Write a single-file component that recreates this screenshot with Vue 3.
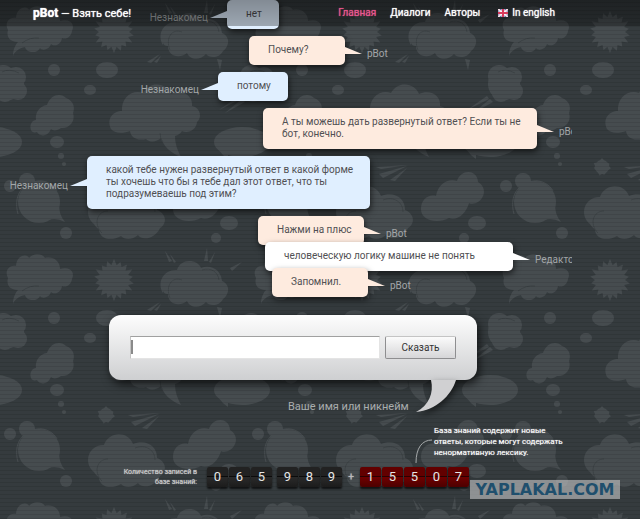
<template>
	<div class="page">
		<svg class="backdrop" aria-hidden="true">
			<defs>
				<pattern id="lines" width="4" height="4" patternUnits="userSpaceOnUse">
					<rect width="4" height="1" y="2" fill="#000" opacity="0.09" />
				</pattern>
				<pattern id="clouds" width="248" height="248" patternUnits="userSpaceOnUse">
					<g fill="#464c4f">
						<path d="M8 30c-4-8 2-13 8-12 1-12 12-12 13-8 5-6 14-4 16 0 8-2 15 3 15 11 11-3 15 4 12 10-1 6-6 9-10 7-1 7-8 9-11 6-2 6-9 7-11 4-4 7-14 4-15-1-6 1-11 5-12 9 0-7 3-12 5-14-8 0-12-5-10-12z" />
						<polygon :points="burst(114, 32, 21, 15, 18)" />
						<path d="M163 45c-7-12 2-24 14-23 4-12 20-11 24-2 10-4 20 2 21 13 9 4 7 14 1 18-4 8-14 7-17 3-6 7-16 6-19-1-9 7-19 2-19-7-3 0-4-1-5-3z" />
						<path d="M169 14l-4-11 7 10M174 15l-4-9 6 8M204 13l3-13 1 13M209 14l6-10-4 11M230 20l12-6-10 9M147 62l13-8-9 9M154 62l7-6-4 7M217 59l3 11 2-10z" />
						<g v-for="x in [8, 256]" :key="x">
							<circle :cx="x" cy="84" r="16" />
							<circle :cx="x - 5" cy="76" r="11" />
							<circle :cx="x + 8" cy="77" r="10" />
							<circle :cx="x + 10" cy="91" r="9" />
							<circle :cx="x - 3" cy="93" r="9" />
							<path :d="`M${x - 17} 96l-20 14 22-11M${x - 14} 99l-17 14 20-11`" />
						</g>
						<circle cx="54" cy="70" r="6" />
						<ellipse cx="107" cy="70" rx="11" ry="8" />
						<ellipse cx="90" cy="90" rx="6" ry="5" />
						<path d="M31 130c-2-6 2-10 5-10-1-8 4-14 11-15 4-11 14-12 19-7 8 3 9 10 7 15 3 9-5 16-12 15-4 3-8 3-10 1-4 9-12 7-14 3-3 1-5 0-6-2z" />
						<ellipse cx="57" cy="142" rx="7" ry="6" />
						<circle cx="61" cy="156" r="3" />
						<circle cx="64" cy="164" r="2" />
						<path d="M111 129c-5-11 3-18 11-18-1-15 12-22 21-18 7-13 24-10 28 1 12-5 22 2 21 12 9 2 10 12 5 16-1 8-9 12-15 9-2 3-4 4-7 5 0 9 3 15 6 21-11-4-18-12-20-19-5 4-10 5-15 1-8 2-15-1-16-8-8 3-16 2-19-2z" />
						<g v-for="x in [-6, 242]" :key="x">
							<ellipse :cx="x" cy="142" rx="28" ry="15" />
							<path :d="`M${x - 23} 150q3 5 9 9v-6z`" />
						</g>
						<polygon :points="burst(106, 167, 9, 7, 11)" />
						<path d="M128 167l32-2-27 4M131 174l28-8-24 12M142 180l17-12-12 13z" />
						<circle cx="39" cy="202" r="21" />
						<path d="M59 201q-1 13 6 21-9-5-17-2z" />
						<circle cx="27" cy="181" r="8" />
						<circle cx="10" cy="186" r="6" />
						<circle cx="66" cy="233" r="6" />
						<path d="M94 224c-11-9-6-27 10-27 5-14 24-14 29-1 13-5 24 2 24 14 10 4 10 14 3 18-5 11-18 13-22 7-6 5-13 5-17 1-10 6-22 3-22-7-2-1-3-2-5-5z" />
						<path d="M173 209c0-10 8-15 15-13 2-13 13-18 21-15 4-12 20-12 21 1 10 6 6 18-2 21-3 1-6 1-7 0-3 11-12 18-20 15-11 6-28 3-28-9z" />
						<ellipse cx="229" cy="223" rx="9" ry="7" />
						<circle cx="216" cy="238" r="5" />
					</g>
					<g fill="none" stroke="#3b4144">
						<path d="M170 50c-5-12 2-22 12-18M202 22c9-3 16 2 17 10M102 233c-9-9-5-22 6-22M135 200c11-4 20 2 20 12M22 43q8-6 17-5M2 72q7-4 17 1M160 133q0 6 3 9" />
					</g>
					<path d="M18 214c-5-18 4-31 20-33 8-1 16 4 19 10" fill="none" stroke="#464c4f" />
				</pattern>
			</defs>
			<rect width="100%" height="100%" fill="url(#clouds)" />
			<rect width="100%" height="100%" fill="url(#lines)" />
		</svg>

		<header class="header">
			<a class="logo" href="#"><b>pBot</b> — Взять себе!</a>
			<nav class="nav">
				<a v-for="item in menu" :key="item" href="#" :class="{ active: item === current }">{{ item }}</a>
				<a class="lang" href="#">
					<svg width="10" height="8" viewBox="0 0 10 8" aria-hidden="true">
						<rect width="10" height="8" fill="#4a4f95" />
						<path d="M0 0l10 8M10 0L0 8" stroke="#f3dfe6" stroke-width="2" />
						<path d="M5 0v8M0 4h10" stroke="#fff" stroke-width="3" />
						<path d="M5 0v8M0 4h10" stroke="#d93a5c" stroke-width="2" />
					</svg>
					In english
				</a>
			</nav>
		</header>

		<main>
			<div class="chat">
				<div v-for="(msg, index) in messages" :key="index" class="message" :class="[msg.type, { fresh: msg.fresh }]"
					:style="{ marginLeft: msg.offset + 'px' }">
					<div class="bubble" :style="{ width: msg.width + 'px' }">
						<div v-for="line in msg.lines" :key="line">{{ line }}</div>
					</div>
					<svg class="tail" width="17" height="8" viewBox="0 0 17 8" aria-hidden="true">
						<path d="M0 0L17 7L0 7z" />
					</svg>
					<span class="name">{{ msg.name }}</span>
				</div>
			</div>

			<form class="say" @submit.prevent="say">
				<input v-model="text" type="text" aria-label="Сообщение">
				<button type="submit">Сказать</button>
				<svg class="say-tail" width="42" height="33" viewBox="0 0 42 33" aria-hidden="true">
					<path d="M15 0H40C35 16 20 30 0 32C13 25 18 13 15 0z" fill="#d0d0d2" />
				</svg>
			</form>
			<a class="nickname" href="#">Ваше имя или никнейм</a>
		</main>

		<footer class="footer">
			<div class="note">
				<svg width="18" height="25" viewBox="0 0 18 25" aria-hidden="true">
					<path d="M17 1C7 1 1 9 1 24" fill="none" stroke="#a5a9aa" />
				</svg>
				<p>База знаний содержит новые<br>ответы, которые могут содержать<br>ненормативную лексику.</p>
			</div>
			<div class="counter">
				<p>Количество записей в<br>базе знаний:</p>
				<div class="digits">
					<span v-for="(digit, index) in total" :key="index" class="digit">{{ digit }}</span>
				</div>
				<span class="plus">+</span>
				<div class="digits red">
					<span v-for="(digit, index) in added" :key="index" class="digit">{{ digit }}</span>
				</div>
			</div>
		</footer>

		<div class="watermark">YAPLAKAL.COM</div>
	</div>
</template>

<script setup>
import { ref } from 'vue';

const menu = ['Главная', 'Диалоги', 'Авторы'];
const current = ref('Главная');
const text = ref('');
const total = '065989'.split('');
const added = '15507'.split('');

const messages = ref([
	{ type: 'guest', name: 'Незнакомец', offset: 140, width: 52, lines: ['нет'] },
	{ type: 'bot', name: 'pBot', offset: 249, width: 96, lines: ['Почему?'] },
	{ type: 'guest', name: 'Незнакомец', offset: 131, width: 70, lines: ['потому'] },
	{ type: 'bot', name: 'pBot', offset: 263, width: 274, lines: ['А ты можешь дать развернутый ответ? Если ты не', 'бот, конечно.'] },
	{ type: 'guest', name: 'Незнакомец', offset: 0, width: 283, lines: ['какой тебе нужен развернутый ответ в какой форме', 'ты хочешь что бы я тебе дал этот ответ, что ты', 'подразумеваешь под этим?'] },
	{ type: 'bot', name: 'pBot', offset: 258, width: 106, lines: ['Нажми на плюс'] },
	{ type: 'editor', name: 'Редактор', offset: 265, width: 248, lines: ['человеческую логику машине не понять'], fresh: true },
	{ type: 'bot', name: 'pBot', offset: 272, width: 96, lines: ['Запомнил.'], fresh: true },
]);

const say = () => {
	text.value = '';
};

// points of a spiky star with alternating radii
const burst = (cx, cy, outer, inner, spikes) => {
	const points = [];
	for (let i = 0; i < spikes * 2; i++) {
		const r = i % 2 ? inner : outer - (i % 3);
		const angle = (Math.PI * i) / spikes;
		points.push(`${(cx + r * Math.sin(angle)).toFixed(1)},${(cy - r * Math.cos(angle)).toFixed(1)}`);
	}
	return points.join(' ');
};
</script>

<style>
body {
	margin: 0;
	background: #353b3e;
}
</style>

<style scoped>
.page {
	position: relative;
	min-height: 100vh;
	overflow: hidden;
	background: #353b3e;
	font-family: Roboto, "Noto Sans", sans-serif;
	font-size: 10px;
	line-height: 12px;
	color: #fff;
}

.backdrop {
	position: absolute;
	top: 0;
	left: 0;
	width: 100%;
	height: 100%;
}

a {
	color: inherit;
	text-decoration: none;
}

p {
	margin: 0;
}

.header {
	position: absolute;
	z-index: 5;
	top: 0;
	left: 0;
	right: 0;
	height: 26px;
	padding: 0 85px 0 33px;
	box-sizing: border-box;
	display: flex;
	align-items: center;
	justify-content: space-between;
	background: linear-gradient(rgba(0, 0, 0, 0.42), rgba(0, 0, 0, 0.3));
	text-shadow: 0 0 1px #fff;
}

.logo {
	font-size: 11px;
}

.logo b {
	font-size: 12px;
}

.nav {
	display: flex;
	column-gap: 14px;
}

.nav .active {
	color: #e8578d;
	text-shadow: 0 0 1px #e8578d;
}

.lang {
	display: flex;
	align-items: center;
	column-gap: 4px;
	margin-left: 4px;
}

main {
	position: relative;
	display: flex;
	flex-direction: column;
}

.chat {
	margin-right: 68px;
	display: flex;
	flex-direction: column;
	row-gap: 7px;
	overflow: hidden;
	padding-bottom: 18px;
}

.message {
	display: flex;
	align-items: center;
	color: #505053;
}

.message.fresh {
	margin-top: -10px;
}

.guest {
	flex-direction: row-reverse;
	justify-content: flex-end;
}

.bubble {
	flex: none;
	box-sizing: border-box;
	padding: 8px 0 9px 19px;
	border-radius: 5px;
	background: #feebdf;
	white-space: nowrap;
	box-shadow: 1px 3px 6px rgba(0, 0, 0, 0.6);
}

.guest .bubble {
	background: #e0efff;
}

.editor .bubble {
	background: #fff;
}

.tail {
	flex: none;
	z-index: 1;
	fill: #feebdf;
}

.guest .tail {
	fill: #e0efff;
	transform: scaleX(-1);
}

.editor .tail {
	fill: #fff;
}

.name {
	flex: none;
	margin-top: 6px;
	padding-left: 5px;
	color: #a2a6a8;
}

.guest .name {
	width: 70px;
	padding: 0;
	padding-right: 2px;
	box-sizing: border-box;
	text-align: right;
}

.say {
	position: relative;
	display: flex;
	column-gap: 5px;
	margin: 0 163px 0 109px;
	padding: 21px;
	border-radius: 12px;
	background: linear-gradient(#fdfdfd, #cecfd1);
	box-shadow: 2px 4px 10px rgba(0, 0, 0, 0.7);
}

.say input {
	flex: 1;
	min-width: 0;
	height: 23px;
	box-sizing: border-box;
	padding: 0 3px;
	border: 1px solid #e4e4e4;
	border-top-color: #a0a0a0;
	border-left-color: #c4c4c4;
	background: linear-gradient(#8a8a8a, #8a8a8a) 0 3px / 2px 14px no-repeat #fff;
	font: inherit;
	outline: none;
}

.say button {
	width: 71px;
	height: 23px;
	padding: 0;
	border: 1px solid #8e8e90;
	border-top-color: #c4c4c4;
	border-radius: 2px;
	background: linear-gradient(#fbfbfb, #d6d6d8);
	font: inherit;
	color: #333;
}

.say-tail {
	position: absolute;
	right: 19px;
	top: 100%;
	overflow: visible;
	filter: drop-shadow(2px 3px 3px rgba(0, 0, 0, 0.5));
}

.nickname {
	align-self: flex-start;
	margin: 21px 0 0 288px;
	font-size: 11px;
	color: #a9adae;
}

.footer {
	position: relative;
	margin-top: 12px;
	text-shadow: 0 0 1px #ccc;
}

.note {
	display: flex;
	align-items: flex-end;
	column-gap: 1px;
	margin-left: 415px;
	font-size: 8px;
	line-height: 11px;
}

.note svg {
	margin-bottom: -6px;
}

.counter {
	display: flex;
	align-items: center;
	margin-top: 9px;
}

.counter p {
	width: 197px;
	margin-right: 10px;
	font-size: 7px;
	line-height: 10px;
	text-align: right;
	color: #ccc;
}

.digits {
	display: flex;
	column-gap: 1px;
}

.digit {
	width: 21px;
	height: 20px;
	border-radius: 2px;
	background: linear-gradient(#222 0 45%, #0b0b0b 45% 50%, #2a2a2a 50%, #1c1c1c);
	box-shadow: 0 2px 2px rgba(0, 0, 0, 0.7);
	font-size: 13px;
	line-height: 19px;
	text-align: center;
	text-shadow: none;
	color: #e6e6e6;
}

.digit:nth-child(4) {
	margin-left: 4px;
}

.red .digit {
	margin-left: 0;
	background: linear-gradient(#620000 0 45%, #2a0000 45% 50%, #700000 50%, #4d0000);
}

.plus {
	width: 18px;
	text-align: center;
	color: #bbb;
}

.watermark {
	position: absolute;
	z-index: 6;
	right: 20px;
	bottom: 20px;
	width: 150px;
	background: rgba(190, 192, 194, 0.65);
	font: bold 16px/19px "DejaVu Sans", sans-serif;
	text-align: center;
	color: #1f4f6d;
}
</style>
